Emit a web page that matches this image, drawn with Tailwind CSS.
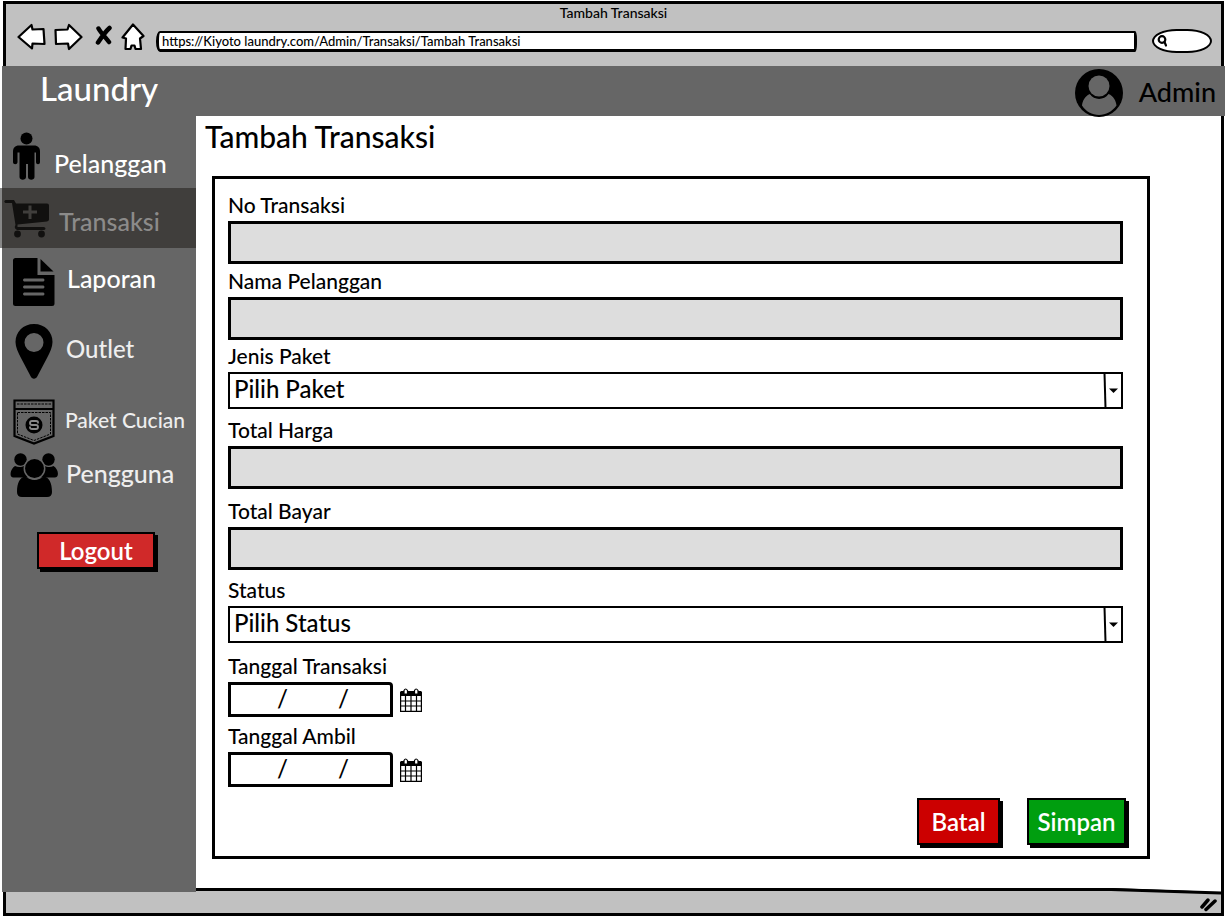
<!DOCTYPE html>
<html lang="id">
<head>
<meta charset="utf-8">
<meta name="viewport" content="width=device-width, initial-scale=1">
<title>Tambah Transaksi</title>
<script src="https://cdn.jsdelivr.net/npm/@tailwindcss/browser@4"></script>
</head>
<body class="flex min-h-screen flex-col bg-white pt-px font-['Lato','Noto_Sans',sans-serif] font-medium text-black">

<!-- Browser chrome -->
<div class="ml-[3px] mr-px h-[65px] border-[3px] border-b-0 border-black bg-[#c1c1c1]">
  <div class="pt-px text-center text-sm leading-4">Tambah Transaksi</div>
  <div class="flex items-center pl-[11px] pr-[9px]">
    <button type="button" aria-label="Kembali" class="mr-2"><svg class="block h-7 w-[29px]" viewBox="0 0 29 28" fill="#fff" stroke="#000" stroke-width="2.2" stroke-linejoin="round"><path d="M1.500 14 14.500 2 15.500 6.500 26.500 6 27.500 21 15.500 20.500 15 25.500Z"/></svg></button>
    <button type="button" aria-label="Maju" class="mr-3"><svg class="block h-7 w-[29px]" viewBox="0 0 29 28" fill="#fff" stroke="#000" stroke-width="2.200" stroke-linejoin="round"><path d="M1.500 7 13.500 6.500 15 2 27.500 14 15 26 14 20.500 2 21Z"/></svg></button>
    <button type="button" aria-label="Berhenti" class="mr-2"><svg class="block h-7 w-[18px]" viewBox="0 0 18 28" fill="none" stroke="#000" stroke-width="4.500" stroke-linecap="round"><path d="M3.500 5.500C6 10 11 15 14 19M14.500 5C10 9 6 15 3 19.500"/></svg></button>
    <button type="button" aria-label="Beranda" class="mr-[11px]"><svg class="block h-7 w-6" viewBox="0 0 24 28" fill="#fff" stroke="#000" stroke-width="2.200" stroke-linejoin="round"><path d="M12 1.500 22.500 13 19 15.500 20 26H14.500L13.500 22.500H10.500L9.500 26H4.500L5 15.500 1.500 14.500Z"/></svg></button>
    <input type="text" aria-label="Alamat" value="https://Kiyoto laundry.com/Admin/Transaksi/Tambah Transaksi" class="mt-2 h-[21px] min-w-0 flex-1 rounded-l-[4px_10px] rounded-r-[2px_8px] border-[3px] border-t-2 border-black bg-white px-[3px] text-[13px] leading-4 outline-none">
    <div class="ml-[15px] mt-2 flex h-6 w-[60px] items-center rounded-[45%/55%] border-2 border-black bg-white pl-[3px]">
      <svg class="h-3 w-[11px] shrink-0" viewBox="0 0 11 12" fill="none" stroke="#000" stroke-width="2.200" stroke-linecap="round"><circle cx="5" cy="4.500" r="3.300"/><path d="M7.500 7 9 10.500"/></svg>
      <input type="search" aria-label="Cari" class="h-4 w-full min-w-0 flex-1 bg-transparent text-xs outline-none">
    </div>
  </div>
</div>

<!-- Application header -->
<header class="ml-[2px] flex h-[50px] items-center justify-between bg-[#666] pl-[38px] pr-[9px]">
  <div class="pb-[6px] text-[33px] leading-9 text-white">Laundry</div>
  <div class="flex items-center">
    <svg class="mr-4 mt-1 h-12 w-12" viewBox="0 0 48 48"><circle cx="24" cy="24" r="24"/><path fill="#666" d="M15 25C19 31.500 29 31.500 33.500 25 38.500 27 41 31.500 41.500 36.500 37 42.500 31 46 24 46S11 42.500 7 36.500C7.500 31.500 10 27 15 25Z"/><circle cx="24" cy="17" r="12" fill="#000"/><circle cx="24" cy="17" r="10.500" fill="#666"/></svg>
    <span class="mt-[2px] text-[27px] leading-9">Admin</span>
  </div>
</header>

<div class="flex flex-1">
  <nav class="relative z-10 -mb-1 flex w-[196px] shrink-0 flex-col border-l-2 border-white bg-[#666] bg-clip-padding pb-2 text-[25px] leading-8 text-white">
    <a href="#" class="flex h-[72px] items-end pb-2 pl-[10px]">
      <svg class="mr-[13px] h-12 w-[29px]" viewBox="0 0 29 48"><circle cx="14.500" cy="6.500" r="6"/><path d="M7 13.500h15c4 0 6 2.500 6 6V30c0 3-4 3-4 0v-9.500h-1.500V45c0 3.500-6.500 3.500-6.500 0V32h-2v13c0 3.500-6.500 3.500-6.500 0V20.500H5.500V30c0 3-4.500 3-4.500 0V19.500c0-3.500 2-6 6-6Z"/></svg>
      <span class="pb-px">Pelanggan</span>
    </a>
    <a href="#" aria-current="page" class="-ml-[2px] flex h-[60px] items-center border-l-2 border-[#888] bg-[#403e3c] pl-[2px] text-[#8c8b8a]">
      <svg class="mr-[10px] mt-1 h-10 w-[45px]" viewBox="0 0 45 40" fill="#11100f"><path fill-rule="evenodd" d="M1.500 0H10L12 3.500H43Q45 3.500 45 5.500V19.500Q45 21 43 21.500L13.500 24.500V27H39.500Q41.500 27 41.500 28.500T39.500 30H13Q9.500 28.500 11.500 25L8 3H1.500Q-1 1.500 1.500 0ZM24.500 5.500V10.500H19V13.500H24.500V19H27.500V13.500H33V10.500H27.500V5.500Z"/><circle cx="13.500" cy="34" r="3.400"/><circle cx="37.500" cy="34" r="3.400"/></svg>
      <span class="pt-[6px]">Transaksi</span>
    </a>
    <a href="#" class="flex h-[68px] items-center pl-[11px]">
      <svg class="mr-3 h-12 w-[42px]" viewBox="0 0 42 48"><path fill-rule="evenodd" d="M2.500 0H24.500V17H41.500V45.500Q41.500 48 39 48H2.500Q0 48 0 45.500V2.500Q0 0 2.500 0ZM11 20.500Q9 22 11 23.500H30.500Q32.500 22 30.500 20.500ZM11 27.500Q9 29 11 30.500H30.500Q32.500 29 30.500 27.500ZM11 34.500Q9 36 11 37.500H30.500Q32.500 36 30.500 34.500Z"/><path d="M27.500 1 40.500 13.500H27.500Z"/></svg>
      <span class="pb-2">Laporan</span>
    </a>
    <a href="#" class="flex h-20 items-center pb-[10px] pl-[13px] text-2xl text-[#eee]">
      <svg class="mr-[13px] h-[55px] w-[38px]" viewBox="0 0 38 55"><path fill-rule="evenodd" d="M19 0C30 0 37.500 8 37.500 18 37.500 23 35 28 32 34L22.500 52C21 55.500 17 55.500 15.500 52L6 34C3 28 .5 23 .5 18 .5 8 8 0 19 0ZM19 9a9.500 9.500 0 1 0 0 19 9.500 9.500 0 0 0 0-19Z"/></svg>
      <span class="pb-1">Outlet</span>
    </a>
    <a href="#" class="flex h-[51px] items-center pl-[11px] text-[21px] text-[#eee]">
      <svg class="mr-[10px] h-[46px] w-[42px]" viewBox="0 0 42 46" fill="none" stroke="#000"><path stroke-width="2.200" d="M1.500 1.500H40.500V37L21 44.500 1.500 37ZM1 10H41"/><path stroke-width="1" stroke-dasharray="2.500 1" d="M4 5H38M4.500 13.500H37.500V35L21 41.500 4.500 35Z"/><circle cx="21" cy="26" r="8.500" fill="#000" stroke="none"/><path stroke="#888" stroke-width="1.800" d="M25 24.500V23.500Q25 22 23 22H19Q17 22 17 24T19 26H23Q25 26 25 28T23 30H19Q17 30 17 28.500V27.500"/></svg>
      <span class="pb-1">Paket Cucian</span>
    </a>
    <a href="#" class="flex h-[56px] items-center pl-2 text-[#eee]">
      <svg class="mr-2 h-11 w-12" viewBox="0 0 48 44"><circle cx="10.500" cy="6.500" r="6.200"/><circle cx="38.500" cy="6.500" r="6.200"/><path d="M5 13C9 15 12 14 14.500 12.500 14 17 15 20 18 24.500H3.500C0 24.500 0 20 1.500 17Q3 14 5 13ZM43.500 13C40 15 37 14 34 12.500 34.500 17 33.500 20 30.500 24.500H44.500C48.500 24.500 48.500 20 47 17Q45.500 14 43.500 13Z"/><path d="M15.500 23.500C21 28 28 28 33.500 23.500 39 24 42 30 42 39Q42 44 37 44H12Q7 44 7 39C7 30 10 24 15.500 23.500Z"/><circle cx="24.500" cy="15.500" r="10.200" stroke="#666" stroke-width="1.500"/></svg>
      <span class="pb-1">Pengguna</span>
    </a>
    <button type="button" class="ml-[35px] mt-[29px] h-[37px] w-[118px] border-2 border-black bg-[#d02929] text-2xl leading-8 font-semibold text-white shadow-[3px_3px_0_#000]">Logout</button>
  </nav>

  <main class="mr-px flex-1 border-r-[3px] border-black pb-7 pl-4 pr-[71px]">
    <h1 class="-ml-[7px] pt-[2px] text-3xl leading-9">Tambah Transaksi</h1>
    <form class="mt-[22px] flex flex-col border-[3px] border-black pb-2 pl-[13px] pr-6 pt-[14px] text-[21px] leading-6">
      <label for="no">No Transaksi</label>
      <input id="no" type="text" class="mt-1 h-[43px] border-[3px] border-black bg-[#ddd] px-1 outline-none">

      <label for="nama" class="mt-[5px]">Nama Pelanggan</label>
      <input id="nama" type="text" class="mt-1 h-[43px] border-[3px] border-black bg-[#ddd] px-1 outline-none">

      <label for="paket" class="mt-1">Jenis Paket</label>
      <div class="relative mt-1 h-[37px]">
        <select id="paket" class="block h-full w-full appearance-none rounded-none border-2 border-black bg-white pb-1 pl-1 text-2xl leading-7 outline-none"><option>Pilih Paket</option></select>
        <svg class="pointer-events-none absolute right-0 top-0 h-full w-5" viewBox="0 0 20 37"><path d="M1.500 1 2.500 36" stroke="#000" stroke-width="2"/><path d="M6 16.500H15L10.500 21Z"/></svg>
      </div>

      <label for="harga" class="mt-[9px]">Total Harga</label>
      <input id="harga" type="text" class="mt-1 h-[43px] border-[3px] border-black bg-[#ddd] px-1 outline-none">

      <label for="bayar" class="mt-[10px]">Total Bayar</label>
      <input id="bayar" type="text" class="mt-1 h-[43px] border-[3px] border-black bg-[#ddd] px-1 outline-none">

      <label for="status" class="mt-2">Status</label>
      <div class="relative mt-1 h-[37px]">
        <select id="status" class="block h-full w-full appearance-none rounded-none border-2 border-black bg-white pb-1 pl-1 text-2xl leading-7 outline-none"><option>Pilih Status</option></select>
        <svg class="pointer-events-none absolute right-0 top-0 h-full w-5" viewBox="0 0 20 37"><path d="M1.500 1 2.500 36" stroke="#000" stroke-width="2"/><path d="M6 16.500H15L10.500 21Z"/></svg>
      </div>

      <label for="tgl-transaksi" class="mt-[11px]">Tanggal Transaksi</label>
      <div class="mt-1 flex items-center">
        <div class="flex h-[35px] w-[165px] items-center rounded-tr-[4px] border-[3px] border-black bg-white pb-[2px] text-2xl leading-7">
          <input id="tgl-transaksi" type="text" aria-label="Tanggal Transaksi, hari" class="w-[46px] min-w-0 pl-1 outline-none"><span>/</span>
          <input type="text" aria-label="Tanggal Transaksi, bulan" class="w-[50px] min-w-0 pl-1 outline-none"><span>/</span>
          <input type="text" aria-label="Tanggal Transaksi, tahun" class="min-w-0 flex-1 pl-1 outline-none">
        </div>
        <button type="button" aria-label="Pilih Tanggal Transaksi" class="ml-[7px]"><svg class="block h-6 w-[22px]" viewBox="0 0 22 24"><path d="M1 3H21V8H1Z"/><path fill="none" stroke="#000" stroke-width="1.200" d="M.6 4H21.400V23.400H.6ZM5.500 8V23M11 8V23M16.500 8V23M1 13H21M1 18H21"/><path fill="#fff" stroke="#000" stroke-width="1.200" d="M4 6V2.500Q5.500-.5 7.500 2.500V6ZM14.500 6V2.500Q16-.5 18 2.500V6Z"/></svg></button>
      </div>

      <label for="tgl-ambil" class="mt-[7px]">Tanggal Ambil</label>
      <div class="mt-1 flex items-center">
        <div class="flex h-[35px] w-[165px] items-center rounded-tr-[4px] border-[3px] border-black bg-white pb-[2px] text-2xl leading-7">
          <input id="tgl-ambil" type="text" aria-label="Tanggal Ambil, hari" class="w-[46px] min-w-0 pl-1 outline-none"><span>/</span>
          <input type="text" aria-label="Tanggal Ambil, bulan" class="w-[50px] min-w-0 pl-1 outline-none"><span>/</span>
          <input type="text" aria-label="Tanggal Ambil, tahun" class="min-w-0 flex-1 pl-1 outline-none">
        </div>
        <button type="button" aria-label="Pilih Tanggal Ambil" class="ml-[7px]"><svg class="block h-6 w-[22px]" viewBox="0 0 22 24"><path d="M1 3H21V8H1Z"/><path fill="none" stroke="#000" stroke-width="1.200" d="M.6 4H21.400V23.400H.6ZM5.500 8V23M11 8V23M16.500 8V23M1 13H21M1 18H21"/><path fill="#fff" stroke="#000" stroke-width="1.200" d="M4 6V2.500Q5.500-.5 7.500 2.500V6ZM14.500 6V2.500Q16-.5 18 2.500V6Z"/></svg></button>
      </div>

      <div class="-mr-[3px] mt-[11px] flex justify-end gap-[27px] pb-[3px]">
        <button type="button" class="h-[47px] w-[83px] border-2 border-black bg-[#c00] text-2xl font-semibold text-white shadow-[3px_3px_0_#000]">Batal</button>
        <button type="submit" class="h-[47px] w-[99px] border-2 border-black bg-[#009e0f] text-2xl font-semibold text-white shadow-[3px_3px_0_#000]">Simpan</button>
      </div>
    </form>
  </main>
</div>

<!-- Browser status bar -->
<footer class="relative mb-px ml-[3px] mr-px flex h-7 items-end justify-end border-[3px] border-black bg-[#c1c1c1] pb-px pr-1">
  <svg class="absolute -top-[3px] right-0 h-[7px] w-[110px]" viewBox="0 0 110 7"><path fill="#fff" d="M0 0H110V4Z"/><path fill="#c1c1c1" d="M0 3 110 7H0Z"/><path d="M0 0 110 3.500V6.500L0 3Z"/></svg>
  <svg class="h-4 w-[17px]" viewBox="0 0 17 16" fill="none" stroke="#000" stroke-width="3.500" stroke-linecap="round"><path d="M2 11 8 4M6 13.500 15 5"/></svg>
</footer>
</body>
</html>
